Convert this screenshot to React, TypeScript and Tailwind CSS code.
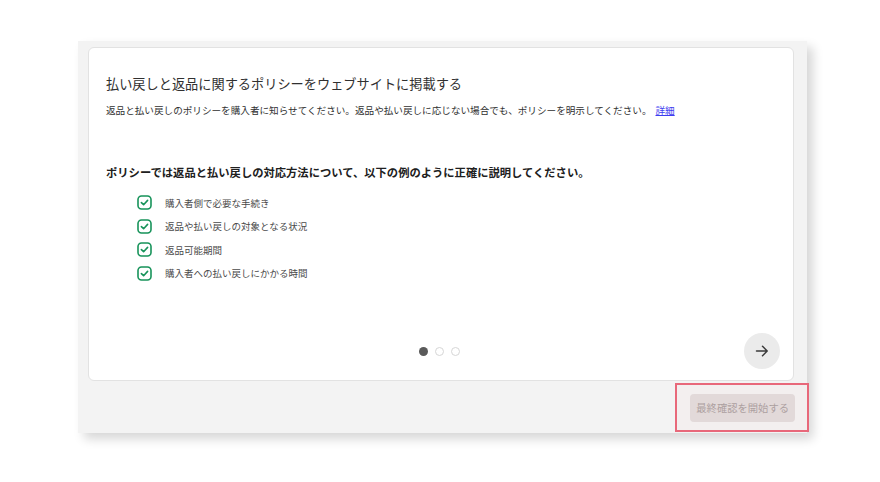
const items = [
  '購入者側で必要な手続き',
  '返品や払い戻しの対象となる状況',
  '返品可能期間',
  '購入者への払い戻しにかかる時間',
];

const jp = "font-['Noto_Sans_CJK_JP','Noto_Sans',sans-serif]";

function CheckBox() {
  return (
    <svg width="15" height="15" viewBox="0 0 15 15" fill="none">
      <rect x="1" y="1" width="13" height="13" rx="3.5" stroke="#17935a" strokeWidth="1.6" />
      <path d="M4.4 7.6 L6.6 9.7 L10.6 5.4" stroke="#17935a" strokeWidth="1.6" strokeLinecap="round" strokeLinejoin="round" />
    </svg>
  );
}

export default function App() {
  return (
    <div className={`w-[880px] h-[482px] bg-white pt-[41px] pl-[78px] ${jp}`}>
      <div className="relative w-[729px] h-[392px] bg-[#f3f3f3] flex flex-col shadow-[6px_6px_10px_rgba(0,0,0,0.16)]">
        <div className="mt-[6px] ml-[10px] w-[706px] h-[334px] bg-white rounded-md border border-[#e2e2e2] flex flex-col px-[17px]">
          <h1 className="pt-[26px] text-[13.2px] leading-[20px] text-[#303030]">
            払い戻しと返品に関するポリシーをウェブサイトに掲載する
          </h1>
          <p className="mt-[8px] text-[9.6px] leading-[16px] text-[#303030]">
            返品と払い戻しのポリシーを購入者に知らせてください。返品や払い戻しに応じない場合でも、ポリシーを明示してください。
            <a className="ml-[4px] text-[#3d3df0] underline">詳細</a>
          </p>
          <p className="mt-[46px] text-[11.3px] leading-[16px] font-bold text-[#202020]">
            ポリシーでは返品と払い戻しの対応方法について、以下の例のように正確に説明してください。
          </p>
          <ul className="mt-[11px] pl-[31px] flex flex-col">
            {items.map((t) => (
              <li key={t} className="h-[23.5px] flex items-center gap-[13px]">
                <CheckBox />
                <span className="text-[9.5px] text-[#4a4a4a]">{t}</span>
              </li>
            ))}
          </ul>
          <div className="mt-auto mb-[11px] relative flex items-center justify-center h-[36px]">
            <div className="flex items-center gap-[7px] mr-[4px]">
              <span className="w-[9px] h-[9px] rounded-full bg-[#5a5a5a]" />
              <span className="w-[9px] h-[9px] rounded-full border-[1.5px] border-[#d6d6d6]" />
              <span className="w-[9px] h-[9px] rounded-full border-[1.5px] border-[#d6d6d6]" />
            </div>
            <button className="absolute right-[-4px] top-0 w-[36px] h-[36px] rounded-full bg-[#ebebeb] flex items-center justify-center">
              <svg width="16" height="16" viewBox="0 0 16 16" fill="none">
                <path d="M2.5 8 H13 M8.5 3.3 L13.2 8 L8.5 12.7" stroke="#3a3a3a" strokeWidth="1.5" strokeLinecap="round" strokeLinejoin="round" />
              </svg>
            </button>
          </div>
        </div>
        <div className="flex-1 flex justify-end items-start pt-[13px] pr-[12px]">
          <button className="h-[28px] px-[6px] rounded bg-[#e2dcdc] text-[10.3px] text-[#aaa2a2]">
            最終確認を開始する
          </button>
        </div>
        <div className="absolute left-[597px] top-[342px] w-[134px] h-[49px] border-2 border-[#e8687a] bg-[rgba(255,120,120,0.03)]" />
      </div>
    </div>
  );
}
